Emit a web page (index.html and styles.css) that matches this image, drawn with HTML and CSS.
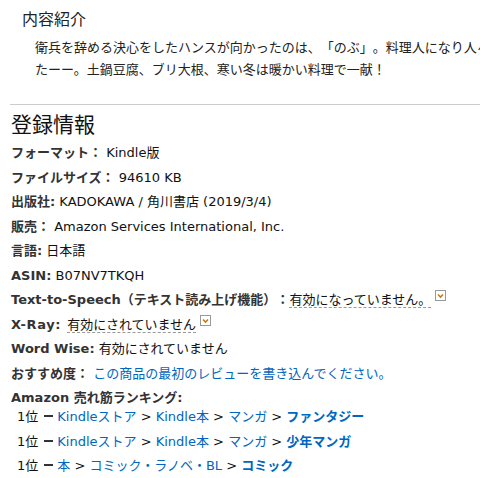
FILE: index.html
```html
<!DOCTYPE html>
<html lang="ja">
<head>
<meta charset="utf-8">
<link rel="stylesheet" href="styles.css">
</head>
<body>
<div class="desc">
  <h3 class="desc-title">内容紹介</h3>
  <div class="desc-body">衛兵を辞める決心をしたハンスが向かったのは、「のぶ」。料理人になり人々を笑顔にしたいと願うハンスの前に、現れたのは……<br>たーー。土鍋豆腐、ブリ大根、寒い冬は暖かい料理で一献！</div>
</div>
<hr class="divider">
<div class="details">
  <h2 class="details-title">登録情報</h2>
  <ul class="rows">
    <li><b>フォーマット：</b> Kindle版</li>
    <li><b>ファイルサイズ：</b> 94610 KB</li>
    <li><b>出版社:</b> KADOKAWA / 角川書店 (2019/3/4)</li>
    <li><b>販売：</b> Amazon Services International, Inc.</li>
    <li><b>言語:</b> 日本語</li>
    <li><b>ASIN:</b> B07NV7TKQH</li>
    <li><b>Text-to-Speech（テキスト読み上げ機能）：</b><span class="dash">有効になっていません。</span> <span class="pop"><svg viewBox="0 0 11 11" width="11" height="11"><rect x="0.5" y="0.5" width="10" height="10" fill="#fff" stroke="#999"/><path d="M3 4.5 L5.5 7 L8 4.5" fill="none" stroke="#c47b12" stroke-width="1.6"/></svg></span></li>
    <li><b class="xray">X-Ray:</b> <span class="dash">有効にされていません</span> <span class="pop"><svg viewBox="0 0 11 11" width="11" height="11"><rect x="0.5" y="0.5" width="10" height="10" fill="#fff" stroke="#999"/><path d="M3 4.5 L5.5 7 L8 4.5" fill="none" stroke="#c47b12" stroke-width="1.6"/></svg></span></li>
    <li><b>Word Wise:</b> 有効にされていません</li>
    <li><b>おすすめ度：</b> <a href="#">この商品の最初のレビューを書き込んでください。</a></li>
    <li><b>Amazon 売れ筋ランキング:</b>
      <ul class="ranks">
        <li>1位<span class="bar"></span><a href="#">Kindleストア</a> &gt; <a href="#">Kindle本</a> &gt; <a href="#">マンガ</a> &gt; <a href="#" class="strong">ファンタジー</a></li>
        <li>1位<span class="bar"></span><a href="#">Kindleストア</a> &gt; <a href="#">Kindle本</a> &gt; <a href="#">マンガ</a> &gt; <a href="#" class="strong">少年マンガ</a></li>
        <li>1位<span class="bar"></span><a href="#">本</a> &gt; <a href="#">コミック・ラノベ・BL</a> &gt; <a href="#" class="strong">コミック</a></li>
      </ul>
    </li>
  </ul>
</div>
</body>
</html>
```
FILE: styles.css
```css
html, body {
  margin: 0;
  padding: 0;
  background: #fff;
  overflow: hidden;
}
body {
  font-family: "DejaVu Sans", "Noto Sans CJK JP", sans-serif;
  font-size: 13px;
  color: #111;
  width: 480px;
  height: 478px;
  text-spacing-trim: space-all;
}
.desc {
  padding: 10px 0 0 22px;
}
.desc-title {
  margin: 0;
  font-size: 16px;
  font-weight: normal;
  line-height: 20px;
  color: #222;
}
.desc-body {
  margin: 7px 0 0 13px;
  line-height: 22px;
  white-space: nowrap;
  color: #222;
}
.divider {
  margin: 23px 0 0 10px;
  border: 0;
  border-top: 1px solid #ccc;
  height: 0;
}
.details {
  padding-left: 11px;
}
.details-title {
  margin: 7px 0 5px 0;
  font-size: 21px;
  font-weight: normal;
  line-height: 26px;
  color: #111;
}
.rows, .ranks {
  list-style: none;
  margin: 0;
  padding: 0;
}
.rows > li {
  line-height: 19px;
  margin-bottom: 5.5px;
}
.rows b {
  font-weight: bold;
  color: #333;
}
.rows b.xray {
  letter-spacing: 0.6px;
  margin-right: 2px;
}
.ranks {
  padding-left: 6px;
}
.ranks li {
  line-height: 19px;
  margin-bottom: 5.5px;
}
.bar {
  display: inline-block;
  width: 9px;
  height: 2px;
  background: #333;
  vertical-align: 4px;
  margin: 0 4px 0 6px;
}
a {
  color: #0066c0;
  text-decoration: none;
}
a.strong {
  font-weight: bold;
}
.dash {
  border-bottom: 1px dashed #999;
}
.pop {
  display: inline-block;
  vertical-align: 3px;
  line-height: 0;
}
```
